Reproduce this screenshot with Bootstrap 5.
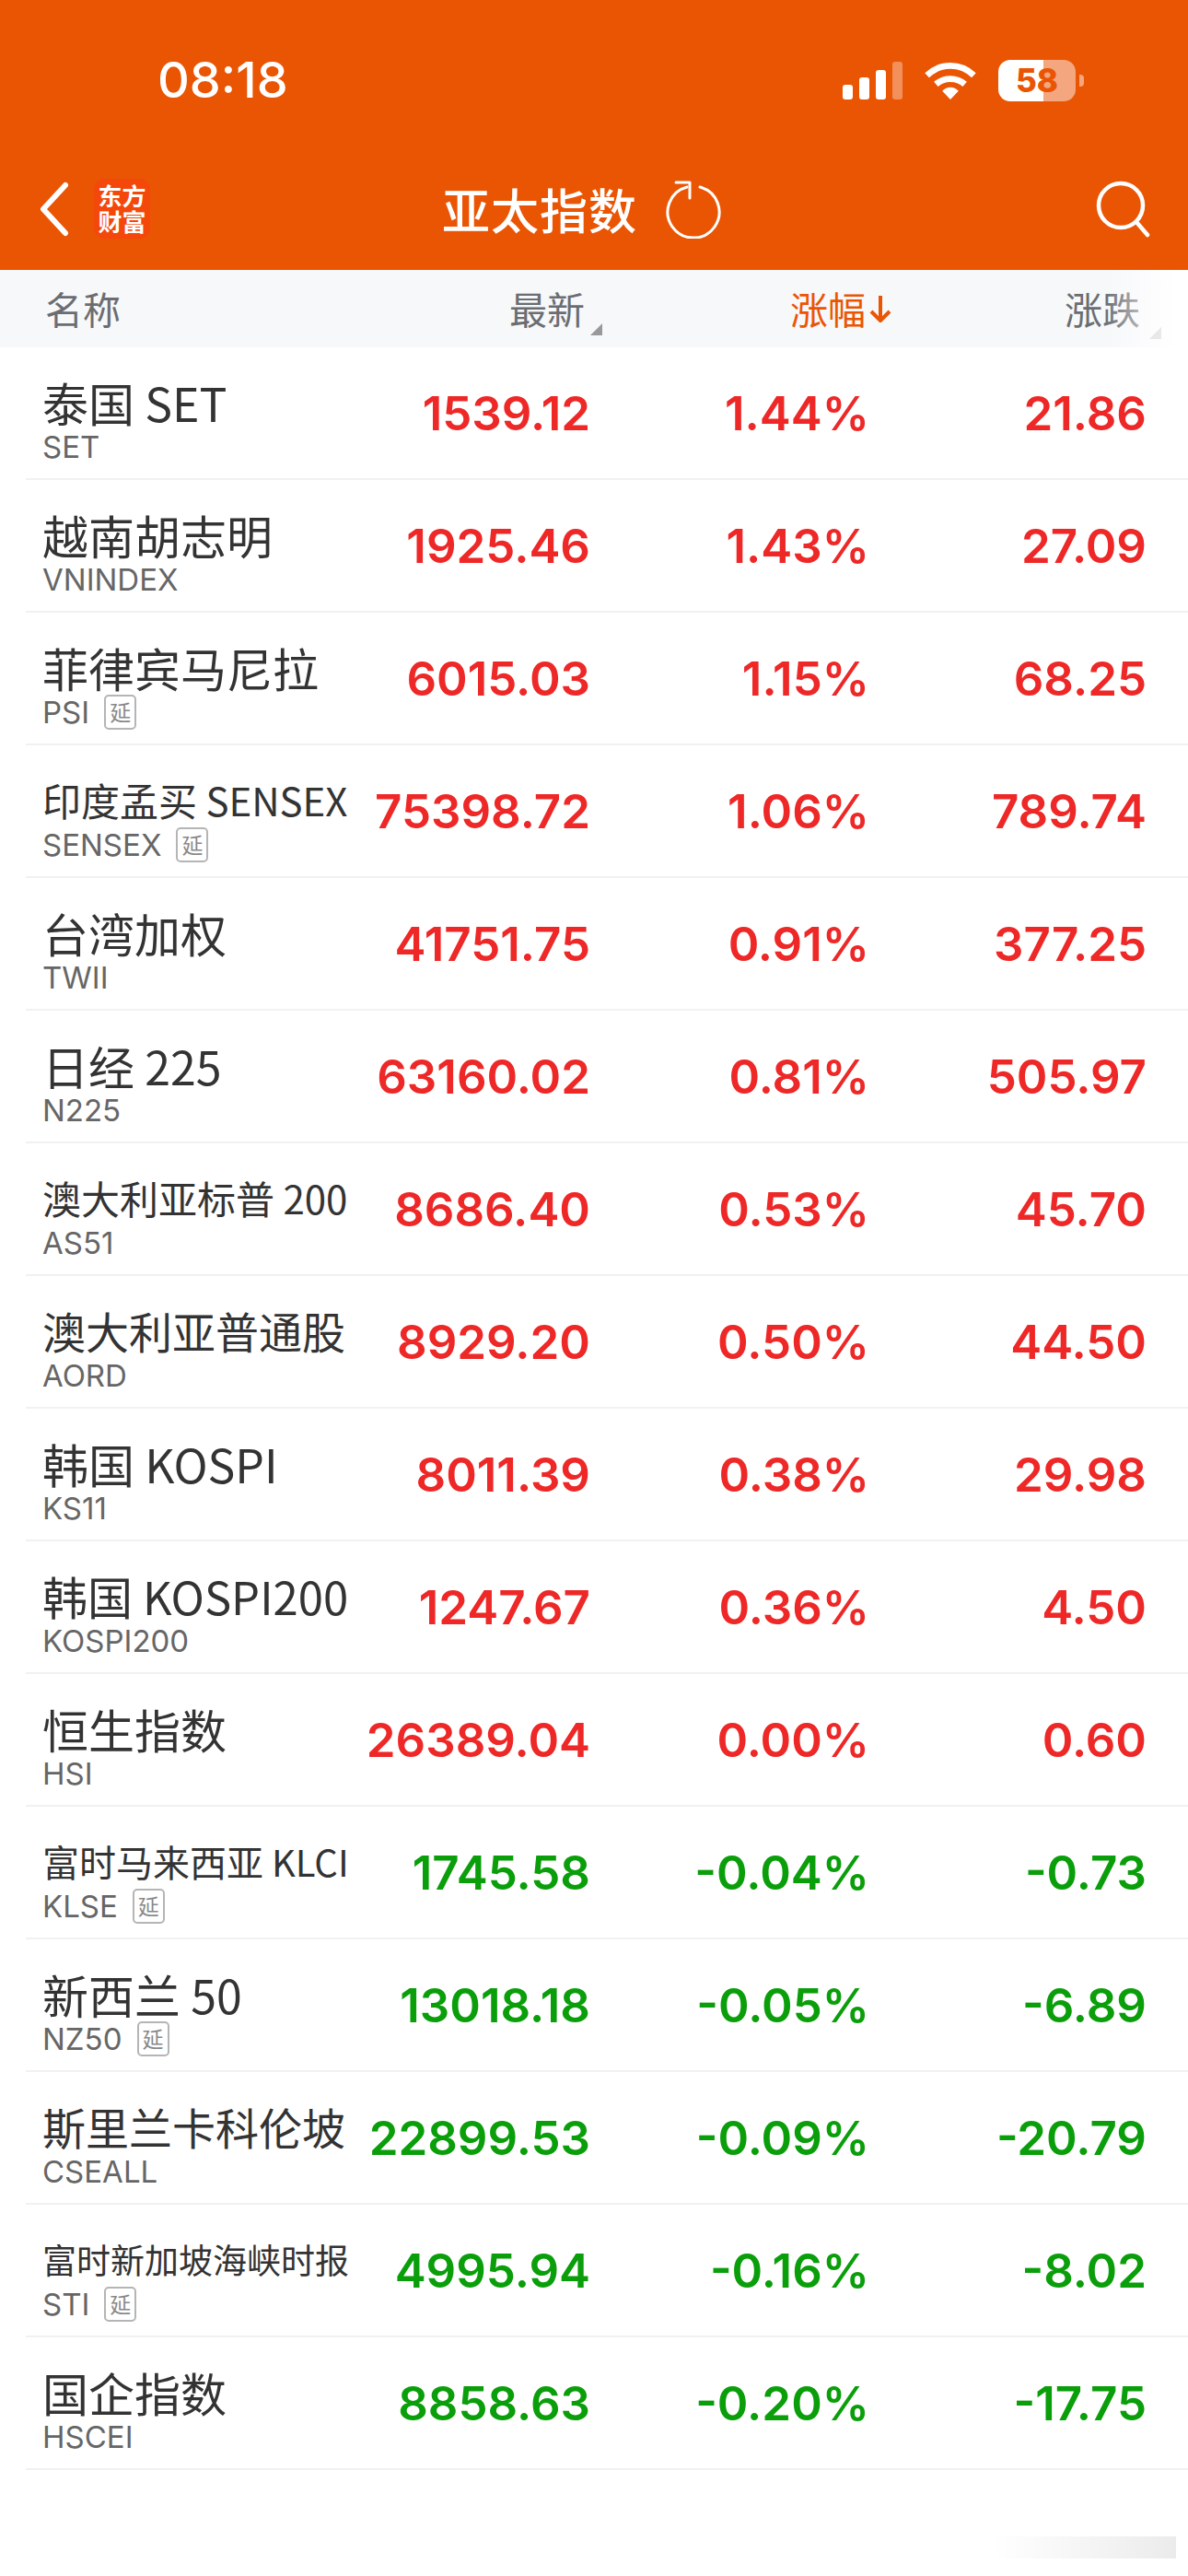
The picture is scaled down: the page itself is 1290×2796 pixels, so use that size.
<!DOCTYPE html>
<html lang="zh-CN">
<head>
    <meta charset="UTF-8">
    <title>亚太指数</title>
    <link href="https://cdn.jsdelivr.net/npm/bootstrap@5.3.3/dist/css/bootstrap.min.css" rel="stylesheet">
    <style>
        body { background: #fff; font-family: Inter, "Noto Sans CJK SC", sans-serif; }
        .cn { font-family: "Noto Sans CJK SC", sans-serif; }

        .app-head { background: #ea5504; height: 293px; color: #fff; }
        .status-row { height: 165px; padding: 9px 113px 0 171px; }
        .clock { font-size: 54px; font-weight: 500; line-height: 1; }
        .status-icons { gap: 23px; }
        .batt { width: 84px; height: 45px; border-radius: 13px; background: linear-gradient(90deg, #fff 58%, #f4a67f 58%); color: #ea5504; font-size: 35px; font-weight: 800; line-height: 45px; }
        .batt-nub { width: 5px; height: 13px; background: #f4a67f; border-radius: 0 4px 4px 0; margin-left: 4px; }
        .title-row { height: 128px; padding: 0 40px 5px 42px; }
        .logo-box { width: 61px; height: 65px; background: #f4470a; border-radius: 12px; margin-left: 26px; font-size: 26px; font-weight: 700; line-height: 28px; text-align: center; padding-top: 4px; }
        .page-title { font-size: 52px; font-weight: 500; line-height: 1; letter-spacing: 1px; margin-left: 317px; }
        .refresh-icon { margin-left: 30px; }

        .col-head { background: #f7f8fa; height: 84px; font-size: 41px; color: #6a6d72; font-weight: 400; position: relative; padding-right: 47px; }
        .h-name { width: 380px; padding-left: 49px; }
        .h-num { text-align: right; position: relative; }
        .h-last { width: 259px; padding-right: 4px; }
        .h-pct { width: 329px; color: #ea5504; }
        .h-chg { width: 275px; padding-right: 5px; }
        .corner { position: absolute; width: 0; height: 0; border-style: solid; border-width: 0 0 13px 13px; border-color: transparent transparent #999 transparent; }
        .fade-edge { position: absolute; right: 0; top: 0; bottom: 0; width: 90px; background: linear-gradient(90deg, rgba(255,255,255,0), #fff 85%); }

        .quote-row { height: 144px; margin-left: 28px; padding: 0 44px 0 18px; border-bottom: 2px solid #f1f1f1; }
        .q-name { width: 334px; flex: none; white-space: nowrap; padding-top: 14px; }
        .q-title { color: #333; font-weight: 400; line-height: 58px; height: 58px; }
        .q-code { color: #666; font-size: 33px; line-height: 38px; font-weight: 400; margin-top: 1px; }
        .delay { border: 2px solid #b5b5b5; border-radius: 5px; font-size: 23px; width: 35px; height: 38px; line-height: 33px; text-align: center; color: #888; margin-left: 16px; }
        .q-val { font-size: 51px; font-weight: 600; text-align: right; flex: none; white-space: nowrap; padding-top: 3px; }
        .w2 { width: 261px; }
        .w3 { width: 303px; }
        .w4 { width: 301px; }
        .up { color: #ee2727; }
        .down { color: #0b9e0b; }

        .smudge { position: relative; height: 115px; }
        .smudge-mark { position: absolute; right: 13px; top: 72px; width: 200px; height: 24px; background: linear-gradient(90deg, rgba(0,0,0,0), rgba(0,0,0,.08)); }
    </style>
</head>
<body>
    <div class="app-head">
        <div class="status-row d-flex align-items-center justify-content-between">
            <span class="clock">08:18</span>
            <div class="status-icons d-flex align-items-center">
                <svg width="65" height="41" viewBox="0 0 65 41" fill="#fff">
                    <rect x="0" y="25" width="11" height="16" rx="3"/>
                    <rect x="18" y="17" width="11" height="24" rx="3"/>
                    <rect x="36" y="9" width="11" height="32" rx="3"/>
                    <rect x="54" y="0" width="11" height="41" rx="3" opacity=".35"/>
                </svg>
                <svg width="58" height="41" viewBox="0 0 58 42" fill="none" stroke="#fff" stroke-width="7">
                    <path d="M3 15C18 1 40 1 55 15"/>
                    <path d="M13 25C22 17 36 17 45 25"/>
                    <path d="M20 32.5 29 42 38 32.5C33 27 25 27 20 32.5Z" fill="#fff" stroke="none"/>
                </svg>
                <div class="d-flex align-items-center">
                    <div class="batt text-center">58</div>
                    <div class="batt-nub"></div>
                </div>
            </div>
        </div>
        <div class="title-row d-flex align-items-center">
            <svg width="34" height="60" viewBox="0 0 34 60" fill="none" stroke="#fff" stroke-width="6" stroke-linecap="round" stroke-linejoin="round">
                <path d="M29 4 5 30 29 56"/>
            </svg>
            <div class="logo-box cn">东方<br>财富</div>
            <div class="page-title cn">亚太指数</div>
            <svg class="refresh-icon" width="62" height="64" viewBox="0 0 62 64" fill="none" stroke="#fff" stroke-width="3" stroke-linecap="round" stroke-linejoin="round">
                <path d="M24 8A28 28 0 1 0 38 8"/>
                <path d="M12 3H27V20"/>
            </svg>
            <svg class="ms-auto" width="60" height="62" viewBox="0 0 60 62" fill="none" stroke="#fff" stroke-width="4.5" stroke-linecap="round">
                <circle cx="27" cy="27" r="24"/>
                <path d="M44 45 56 59"/>
            </svg>
        </div>
    </div>

    <div class="col-head cn d-flex align-items-center">
        <div class="h-name">名称</div>
        <div class="h-num h-last">最新<span class="corner" style="right:-15px;bottom:2px"></span></div>
        <div class="h-num h-pct d-flex align-items-center justify-content-end">涨幅
            <svg class="ms-1" width="24" height="32" viewBox="0 0 24 32" fill="none" stroke="#ea5504" stroke-width="4" stroke-linejoin="round"><path d="M12 2V28M2 19 12 29 22 19"/></svg>
        </div>
        <div class="h-num h-chg">涨跌</div>
        <div class="fade-edge"><span class="corner" style="right:29px;bottom:9px;border-bottom-color:#e8e8e8"></span></div>
    </div>

    <div id="quoteList"></div>
    <div class="smudge"><div class="smudge-mark"></div></div>

    <script>
        // name, code, title size, delayed, last, pct, change
        let quotes = [
            ["泰国 SET", "SET", 50, false, "1539.12", "1.44%", "21.86"],
            ["越南胡志明", "VNINDEX", 50, false, "1925.46", "1.43%", "27.09"],
            ["菲律宾马尼拉", "PSI", 50, true, "6015.03", "1.15%", "68.25"],
            ["印度孟买 SENSEX", "SENSEX", 42, true, "75398.72", "1.06%", "789.74"],
            ["台湾加权", "TWII", 50, false, "41751.75", "0.91%", "377.25"],
            ["日经 225", "N225", 50, false, "63160.02", "0.81%", "505.97"],
            ["澳大利亚标普 200", "AS51", 42, false, "8686.40", "0.53%", "45.70"],
            ["澳大利亚普通股", "AORD", 47, false, "8929.20", "0.50%", "44.50"],
            ["韩国 KOSPI", "KS11", 50, false, "8011.39", "0.38%", "29.98"],
            ["韩国 KOSPI200", "KOSPI200", 49, false, "1247.67", "0.36%", "4.50"],
            ["恒生指数", "HSI", 50, false, "26389.04", "0.00%", "0.60"],
            ["富时马来西亚 KLCI", "KLSE", 40, true, "1745.58", "-0.04%", "-0.73"],
            ["新西兰 50", "NZ50", 50, true, "13018.18", "-0.05%", "-6.89"],
            ["斯里兰卡科伦坡", "CSEALL", 47, false, "22899.53", "-0.09%", "-20.79"],
            ["富时新加坡海峡时报", "STI", 37, true, "4995.94", "-0.16%", "-8.02"],
            ["国企指数", "HSCEI", 50, false, "8858.63", "-0.20%", "-17.75"]
        ];

        let list = document.getElementById("quoteList");
        quotes.forEach(q => {
            let tone = q[5].startsWith("-") ? "down" : "up";
            let delay = q[3] ? `<span class="delay cn d-inline-block">延</span>` : "";
            list.innerHTML += `<div class="quote-row d-flex align-items-center">
                <div class="q-name">
                    <div class="q-title cn" style="font-size:${q[2]}px">${q[0]}</div>
                    <div class="q-code d-flex align-items-center">${q[1]}${delay}</div>
                </div>
                <div class="q-val ${tone} w2">${q[4]}</div>
                <div class="q-val ${tone} w3">${q[5]}</div>
                <div class="q-val ${tone} w4">${q[6]}</div>
            </div>`;
        });
    </script>
</body>
</html>
